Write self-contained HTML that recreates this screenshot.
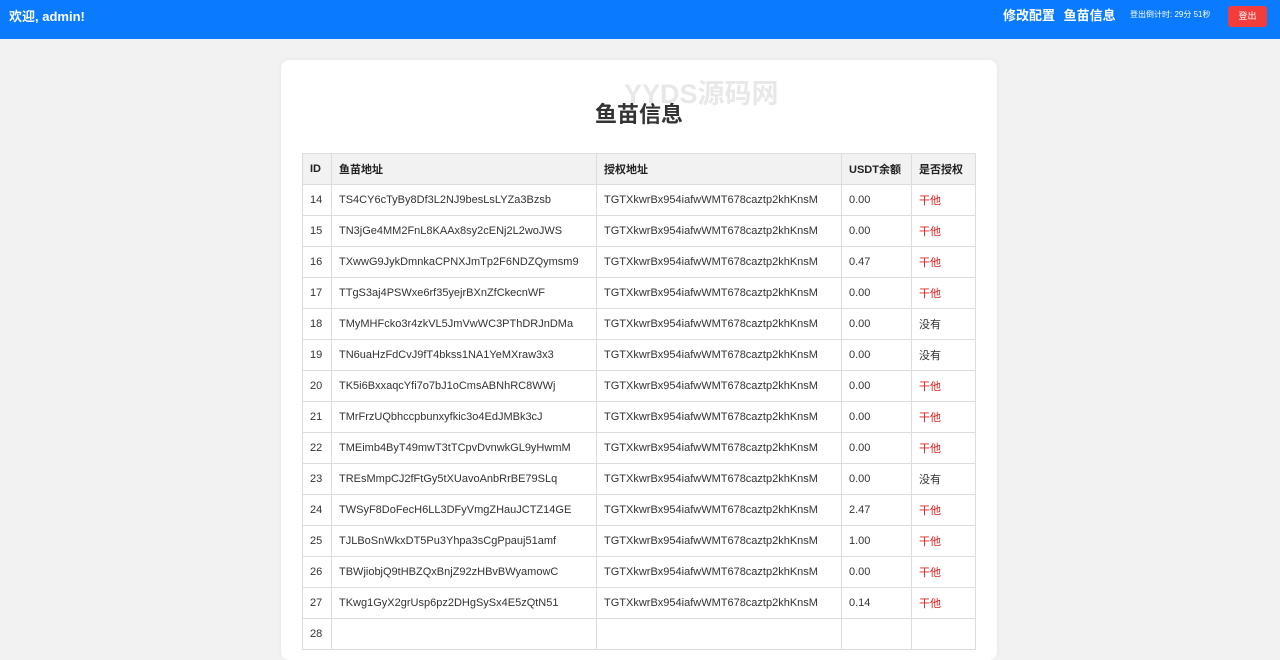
<!DOCTYPE html>
<html><head><meta charset="utf-8"><style>
*{margin:0;padding:0;box-sizing:border-box}
html,body{width:1280px;height:621px;overflow:hidden}
body{background:#f2f2f2;font-family:"Liberation Sans","Noto Sans CJK SC",sans-serif;color:#333}
.top{height:39px;background:#0a7bff;color:#fff;position:relative}
.top .w{position:absolute;left:9px;top:6px;font-size:13px;font-weight:bold}
.top .nav{position:absolute;left:1003px;top:5px;font-size:13px;font-weight:bold;white-space:nowrap}
.top .nav span{margin-right:5px}
.top .cd{position:absolute;left:1130px;top:9px;font-size:8px;white-space:nowrap}
.top .btn{position:absolute;left:1228px;top:6px;width:39px;height:21px;background:#f33d3d;border-radius:3px;font-size:9px;text-align:center;line-height:21px}
.card{position:absolute;left:281px;top:60px;width:716px;height:600px;background:#fff;border-radius:8px;box-shadow:0 0 6px rgba(0,0,0,.06)}
.wm{position:absolute;left:624px;top:72px;font-size:27px;font-weight:bold;color:#e8e8e8}
h1{position:absolute;left:0;width:1278px;top:97px;text-align:center;font-size:22px;font-weight:bold;color:#333}
table{position:absolute;left:302px;top:153px;border-collapse:collapse;font-size:11px;width:673px;table-layout:fixed}
td,th{border:1px solid #ddd;height:31px;padding:0 7px;text-align:left;white-space:nowrap;overflow:hidden}
th{background:#f2f2f2;font-weight:bold;font-size:11px;color:#222}
.r{color:#e02020}
</style></head><body>
<div class="top"><div class="w">欢迎, admin!</div><div class="nav"><span>修改配置</span> <span>鱼苗信息</span></div><div class="cd">登出倒计时: 29分 51秒</div><div class="btn">登出</div></div>
<div class="card"></div>
<div class="wm">YYDS源码网</div>
<h1>鱼苗信息</h1>
<table>
<colgroup><col style="width:29px"><col style="width:265px"><col style="width:245px"><col style="width:70px"><col style="width:64px"></colgroup>
<tr><th>ID</th><th>鱼苗地址</th><th>授权地址</th><th>USDT余额</th><th>是否授权</th></tr>
<tr><td>14</td><td>TS4CY6cTyBy8Df3L2NJ9besLsLYZa3Bzsb</td><td>TGTXkwrBx954iafwWMT678caztp2khKnsM</td><td>0.00</td><td class="r">干他</td></tr>
<tr><td>15</td><td>TN3jGe4MM2FnL8KAAx8sy2cENj2L2woJWS</td><td>TGTXkwrBx954iafwWMT678caztp2khKnsM</td><td>0.00</td><td class="r">干他</td></tr>
<tr><td>16</td><td>TXwwG9JykDmnkaCPNXJmTp2F6NDZQymsm9</td><td>TGTXkwrBx954iafwWMT678caztp2khKnsM</td><td>0.47</td><td class="r">干他</td></tr>
<tr><td>17</td><td>TTgS3aj4PSWxe6rf35yejrBXnZfCkecnWF</td><td>TGTXkwrBx954iafwWMT678caztp2khKnsM</td><td>0.00</td><td class="r">干他</td></tr>
<tr><td>18</td><td>TMyMHFcko3r4zkVL5JmVwWC3PThDRJnDMa</td><td>TGTXkwrBx954iafwWMT678caztp2khKnsM</td><td>0.00</td><td>没有</td></tr>
<tr><td>19</td><td>TN6uaHzFdCvJ9fT4bkss1NA1YeMXraw3x3</td><td>TGTXkwrBx954iafwWMT678caztp2khKnsM</td><td>0.00</td><td>没有</td></tr>
<tr><td>20</td><td>TK5i6BxxaqcYfi7o7bJ1oCmsABNhRC8WWj</td><td>TGTXkwrBx954iafwWMT678caztp2khKnsM</td><td>0.00</td><td class="r">干他</td></tr>
<tr><td>21</td><td>TMrFrzUQbhccpbunxyfkic3o4EdJMBk3cJ</td><td>TGTXkwrBx954iafwWMT678caztp2khKnsM</td><td>0.00</td><td class="r">干他</td></tr>
<tr><td>22</td><td>TMEimb4ByT49mwT3tTCpvDvnwkGL9yHwmM</td><td>TGTXkwrBx954iafwWMT678caztp2khKnsM</td><td>0.00</td><td class="r">干他</td></tr>
<tr><td>23</td><td>TREsMmpCJ2fFtGy5tXUavoAnbRrBE79SLq</td><td>TGTXkwrBx954iafwWMT678caztp2khKnsM</td><td>0.00</td><td>没有</td></tr>
<tr><td>24</td><td>TWSyF8DoFecH6LL3DFyVmgZHauJCTZ14GE</td><td>TGTXkwrBx954iafwWMT678caztp2khKnsM</td><td>2.47</td><td class="r">干他</td></tr>
<tr><td>25</td><td>TJLBoSnWkxDT5Pu3Yhpa3sCgPpauj51amf</td><td>TGTXkwrBx954iafwWMT678caztp2khKnsM</td><td>1.00</td><td class="r">干他</td></tr>
<tr><td>26</td><td>TBWjiobjQ9tHBZQxBnjZ92zHBvBWyamowC</td><td>TGTXkwrBx954iafwWMT678caztp2khKnsM</td><td>0.00</td><td class="r">干他</td></tr>
<tr><td>27</td><td>TKwg1GyX2grUsp6pz2DHgSySx4E5zQtN51</td><td>TGTXkwrBx954iafwWMT678caztp2khKnsM</td><td>0.14</td><td class="r">干他</td></tr>
<tr><td>28</td><td></td><td></td><td></td><td></td></tr>
</table>
</body></html>
